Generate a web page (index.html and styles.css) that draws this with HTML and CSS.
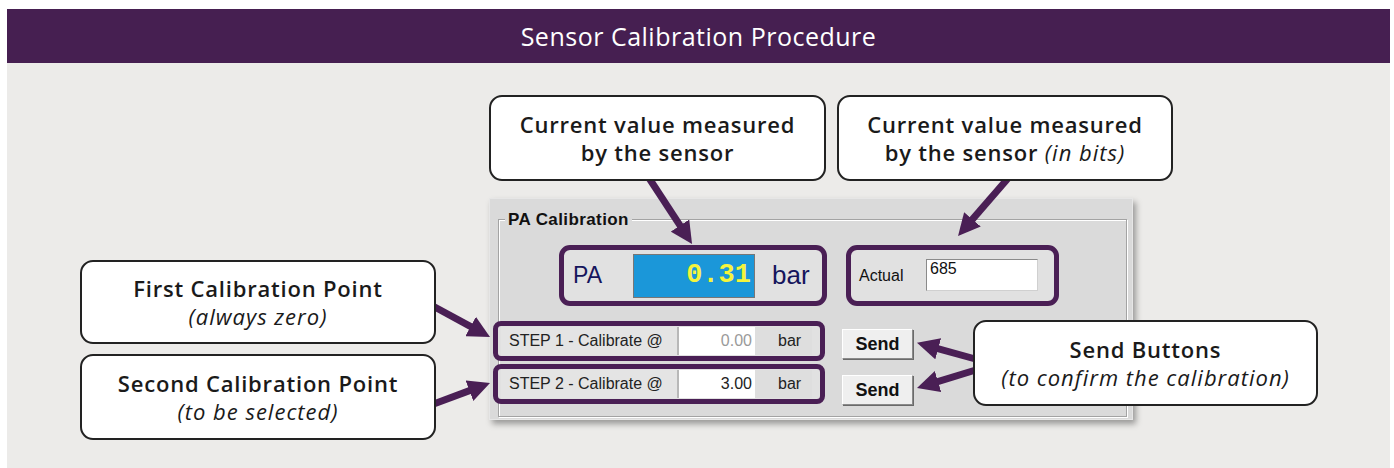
FILE: index.html
```html
<!DOCTYPE html>
<html>
<head>
    <title>Sensor Calibration Procedure</title>
    <link rel="stylesheet" href="styles.css">
</head>
<body>

<div class="frame">
    <h1 class="title">Sensor Calibration Procedure</h1>

    <div class="stage">
        <!-- The software window -->
        <div class="panel">
            <div class="group">
                <span class="legend">PA Calibration</span>

                <div class="row-top">
                    <div class="hl pa-box">
                        <span class="pa-label">PA</span>
                        <span class="pa-display">0.31</span>
                        <span class="pa-unit">bar</span>
                    </div>
                    <div class="hl actual-box">
                        <span class="actual-label">Actual</span>
                        <span class="actual-input">685</span>
                    </div>
                </div>

                <div class="row-steps">
                    <div class="steps">
                        <div class="hl step">
                            <span class="step-label">STEP 1 - Calibrate @</span>
                            <span class="step-input disabled">0.00</span>
                            <span class="step-unit">bar</span>
                        </div>
                        <div class="hl step">
                            <span class="step-label">STEP 2 - Calibrate @</span>
                            <span class="step-input">3.00</span>
                            <span class="step-unit">bar</span>
                        </div>
                    </div>
                    <div class="sends">
                        <button class="send">Send</button>
                        <button class="send">Send</button>
                    </div>
                </div>
            </div>
        </div>

        <!-- Arrows pointing from the callouts -->
        <svg class="arrows" width="1383" height="405" viewBox="0 0 1383 405">
            <defs>
                <marker id="head" markerUnits="userSpaceOnUse" markerWidth="22" markerHeight="22"
                        viewBox="0 0 22 22" refX="8" refY="11" orient="auto">
                    <path d="M0,0 L22,11 L0,22 z" fill="#4a1f55"/>
                </marker>
            </defs>
            <g stroke="#4a1f55" stroke-width="7" marker-end="url(#head)">
                <line x1="640" y1="112" x2="677.4" y2="169.2"/>
                <line x1="1003" y1="113" x2="960.2" y2="162.4"/>
                <line x1="424" y1="242" x2="470.7" y2="267.3"/>
                <line x1="424" y1="342" x2="469.9" y2="324.9"/>
                <line x1="972" y1="297" x2="923.5" y2="283.6"/>
                <line x1="972" y1="306" x2="923.4" y2="320.9"/>
            </g>
        </svg>

        <!-- Callouts -->
        <div class="callout c-value">
            <b>Current value measured</b>
            <b>by the sensor</b>
        </div>
        <div class="callout c-bits">
            <b>Current value measured</b>
            <b>by the sensor <i>(in bits)</i></b>
        </div>
        <div class="callout c-first">
            <b>First Calibration Point</b>
            <i>(always zero)</i>
        </div>
        <div class="callout c-second">
            <b>Second Calibration Point</b>
            <i>(to be selected)</i>
        </div>
        <div class="callout c-send">
            <b>Send Buttons</b>
            <i>(to confirm the calibration)</i>
        </div>
    </div>
</div>

</body>
</html>
```

FILE: styles.css
```css
/* Page */
body {
    margin: 0;
    background-color: #fff;
    font-family: "Open Sans", "Liberation Sans", sans-serif;
}

.frame {
    width: 1383px;
    margin: 9px 0 0 7px;
}

/* Purple title bar */
.title {
    margin: 0;
    height: 54px;
    line-height: 54px;
    background-color: #461f51;
    color: #fff;
    text-align: center;
    font-weight: 400;
    font-size: 25px;
    letter-spacing: 0.5px;
}

/* Diagram area */
.stage {
    position: relative;
    height: 405px;
    background-color: #ecebe9;
}

/* Windows style panel */
.panel {
    position: absolute;
    left: 482px;
    top: 135px;
    width: 644px;
    height: 222px;
    box-sizing: border-box;
    padding: 20px 5px 0 8px;
    background-color: #dadada;
    border: 1px solid #e6e6e6;
    box-shadow: 3px 4px 6px rgba(0, 0, 0, 0.35);
    font-family: "Liberation Sans", Arial, sans-serif;
}

.group {
    height: 198px;
    box-sizing: border-box;
    border: 1px solid #a3a3a3;
    box-shadow: 1px 1px 0 #fff, inset 1px 1px 0 #fff;
}

.legend {
    display: block;
    width: fit-content;
    margin: -9px 0 0 6px;
    padding: 0 3px;
    height: 18px;
    line-height: 18px;
    background-color: #dadada;
    font-weight: bold;
    font-size: 17px;
    letter-spacing: 0.4px;
    color: #111;
}

.row-top {
    display: flex;
    gap: 19px;
    margin: 16px 0 0 60px;
}

/* Purple highlight frames */
.hl {
    display: flex;
    align-items: center;
    box-sizing: border-box;
    border: 5px solid #4a1f55;
    background-color: #e1e1e1;
}

.pa-box {
    width: 268px;
    height: 61px;
    padding-left: 9px;
    border-radius: 11px;
}

.pa-label {
    width: 60px;
    font-size: 23px;
    color: #15155c;
}

.pa-display {
    width: 122px;
    height: 44px;
    box-sizing: border-box;
    padding-right: 3px;
    border: 1px solid #777;
    background-color: #1b97d9;
    color: #f4f43c;
    text-align: right;
    line-height: 40px;
    font-family: "Liberation Mono", monospace;
    font-weight: bold;
    font-size: 27px;
}

.pa-unit {
    margin-left: 17px;
    font-size: 26px;
    color: #15155c;
}

.actual-box {
    width: 213px;
    height: 61px;
    padding-left: 8px;
    border-radius: 11px;
}

.actual-label {
    width: 67px;
    font-size: 16px;
    color: #111;
}

.actual-input {
    align-self: flex-start;
    margin-top: 9px;
    width: 112px;
    height: 32px;
    box-sizing: border-box;
    padding: 0 3px;
    background-color: #fff;
    border: 1px solid #8a8a8a;
    border-right-color: #d0d0d0;
    border-bottom-color: #d0d0d0;
    font-size: 16px;
    color: #111;
}

/* Calibration steps */
.row-steps {
    display: flex;
    margin: 15px 0 0 -6px;
}

.steps {
    display: flex;
    flex-direction: column;
    gap: 3px;
}

.step {
    width: 332px;
    height: 40px;
    padding: 0 4px 0 3px;
    border-radius: 8px;
}

.step-label {
    width: 178px;
    height: 28px;
    box-sizing: border-box;
    padding-left: 8px;
    line-height: 28px;
    background-color: #e4e4e4;
    border-right: 2px solid #b8b8b8;
    font-size: 16px;
    color: #222;
}

.step-input {
    width: 76px;
    height: 28px;
    box-sizing: border-box;
    padding-right: 3px;
    line-height: 28px;
    background-color: #fff;
    text-align: right;
    font-size: 16px;
    color: #222;
}

.step-input.disabled {
    color: #9a9a9a;
}

.step-unit {
    width: 57px;
    height: 28px;
    box-sizing: border-box;
    padding-left: 23px;
    line-height: 28px;
    background-color: #dedede;
    font-size: 16px;
    color: #222;
}

.sends {
    display: flex;
    flex-direction: column;
    gap: 16px;
    margin: 8px 0 0 17px;
}

.send {
    width: 71px;
    height: 30px;
    padding: 0;
    background-color: #efefef;
    border: 1px solid #fff;
    border-right-color: #8a8a8a;
    border-bottom-color: #8a8a8a;
    box-shadow: 1px 1px 0 #6a6a6a;
    font-family: "Liberation Sans", Arial, sans-serif;
    font-weight: bold;
    font-size: 18px;
    color: #111;
}

/* Arrows */
.arrows {
    position: absolute;
    left: 0;
    top: 0;
    pointer-events: none;
}

/* Callouts */
.callout {
    position: absolute;
    display: flex;
    flex-direction: column;
    justify-content: center;
    align-items: center;
    box-sizing: border-box;
    background-color: #fff;
    border: 2px solid #222;
    border-radius: 13px;
    color: #1a1a1a;
    font-size: 22px;
    line-height: 28px;
    letter-spacing: 0.8px;
}

.callout b {
    font-weight: 600;
}

.callout i {
    font-weight: 400;
    font-size: 22px;
    letter-spacing: 1px;
}

.c-value {
    left: 482px;
    top: 32px;
    width: 337px;
    height: 86px;
}

.c-bits {
    left: 830px;
    top: 32px;
    width: 336px;
    height: 86px;
}

.c-first {
    left: 73px;
    top: 197px;
    width: 356px;
    height: 84px;
}

.c-second {
    left: 73px;
    top: 291px;
    width: 356px;
    height: 86px;
}

.c-send {
    left: 966px;
    top: 257px;
    width: 345px;
    height: 86px;
}
```
